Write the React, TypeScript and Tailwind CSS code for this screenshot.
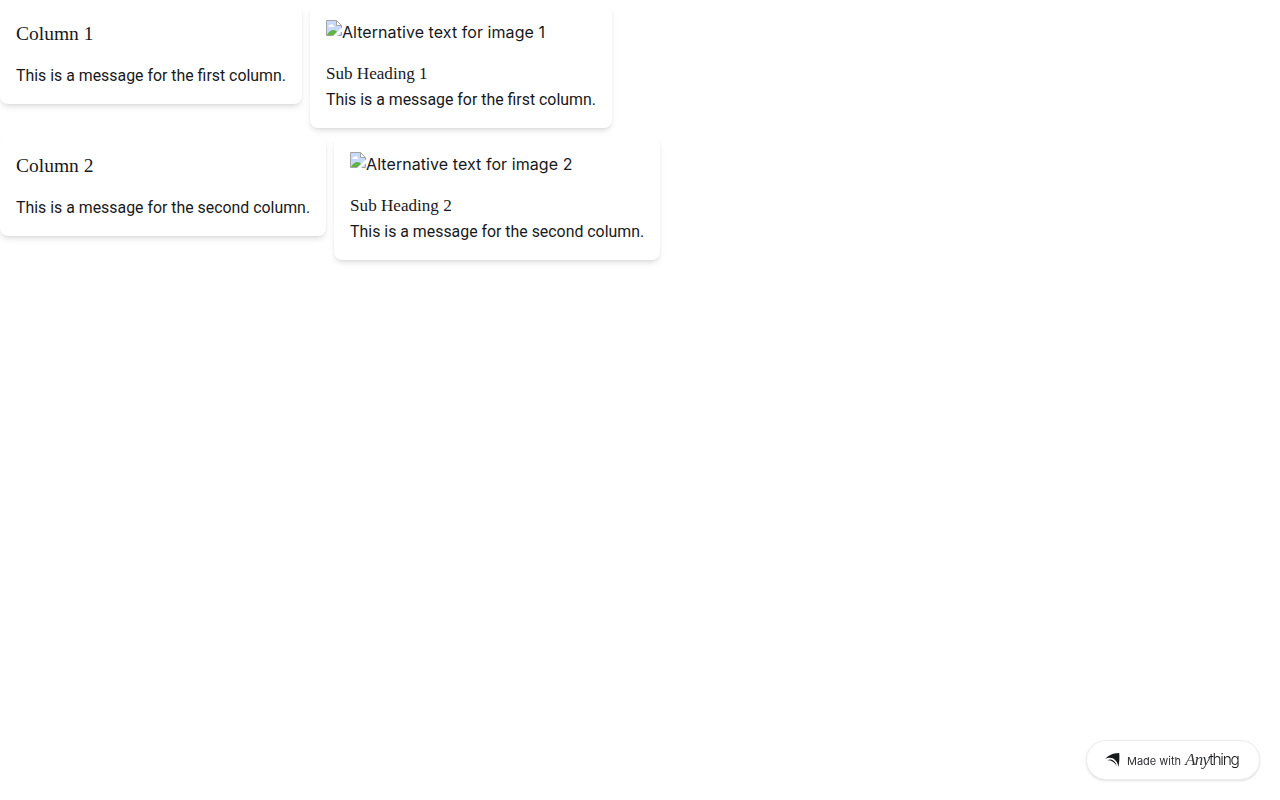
type Column = {
  id: number;
  title: string;
  alt: string;
  subHeading: string;
  message: string;
};

const columns: Column[] = [
  {
    id: 1,
    title: 'Column 1',
    alt: 'Alternative text for image 1',
    subHeading: 'Sub Heading 1',
    message: 'This is a message for the first column.',
  },
  {
    id: 2,
    title: 'Column 2',
    alt: 'Alternative text for image 2',
    subHeading: 'Sub Heading 2',
    message: 'This is a message for the second column.',
  },
];

const cardClass = 'rounded-lg bg-white p-4 shadow-md';
const messageClass = "font-['Roboto',sans-serif] text-[15.88px] leading-6";

function MissingImage({ alt }: { alt: string }) {
  return (
    <div className="mb-4 flex h-6 items-start">
      <svg width="16" height="16" viewBox="0 0 16 16" className="shrink-0">
        <path d="M.5.5h10l5 5v10H.5z" fill="#c8dafc" />
        <path d="M2.5 6.5c0-1.4 1.3-1.8 2-1.2.5-1.5 2.7-1.2 2.8.2 1 0 1 1 .7 1.500H2.8z" fill="#fff" />
        <path d="M1 15c1-3 4-5 6.5-5 2 0 3.5 1.5 3.5 2L8 15z" fill="#5eb544" />
        <path d="M16 7.5V11l-5 5H7z" fill="#fff" />
        <path d="M10.5.5l5 5h-5z" fill="#fff" />
        <path d="M7.5 15.5H.5V.5h10l5 5V8M10.5.5v5h5M11.5 15.5h4V12" fill="none" stroke="#a4a4a4" />
      </svg>
      <span className="font-['Inter',sans-serif] text-base tracking-[0.065px]">{alt}</span>
    </div>
  );
}

function ColumnRow({ column }: { column: Column }) {
  return (
    <div className="flex items-start gap-2 py-1">
      <div className={cardClass}>
        <h2 className="mb-4 font-['Liberation_Serif',serif] text-[19.5px] leading-7">{column.title}</h2>
        <p className={messageClass}>{column.message}</p>
      </div>
      <div className={cardClass}>
        <MissingImage alt={column.alt} />
        <h3 className="font-['Liberation_Serif',serif] text-[17.1px] leading-7">{column.subHeading}</h3>
        <p className={messageClass}>{column.message}</p>
      </div>
    </div>
  );
}

function MadeWithBadge() {
  return (
    <div className="fixed right-5 bottom-5 flex h-10 w-[174px] items-center rounded-full border border-[#ececec] bg-white pl-[18px] shadow-sm">
      <svg width="15" height="16" viewBox="0 0 15 16" className="shrink-0">
        <path d="M0 7C3 4 7 1 14.2 1c.5 4.5.2 9.5-.9 14.2C13 9 7.500 3.200 0 7z" fill="#18191b" />
        <path d="M2.5 8.300c3.500-2.300 8.300.7 9.300 5.700C9.500 10.200 6.500 8.200 2.500 8.300z" fill="#18191b" />
        <path d="M1.500 7.300C7 4.800 11 8.500 12.600 14.300" fill="none" stroke="#fff" strokeWidth=".9" />
      </svg>
      <span className="mt-0.5 ml-[7px] font-['Inter',sans-serif] text-[11px] text-[#303036]">Made with</span>
      <span className="ml-1 flex items-baseline leading-5">
        <span className="font-['Liberation_Serif',serif] text-[17px] tracking-[-0.8px] text-[#333437] italic">Any</span>
        <span className="font-['Inter',sans-serif] text-[15.5px] font-light tracking-[-1.3px]">thing</span>
      </span>
    </div>
  );
}

export default function App() {
  return (
    <div className="min-h-screen bg-white text-[#18191b]">
      {columns.map(column => (
        <ColumnRow key={column.id} column={column} />
      ))}
      <MadeWithBadge />
    </div>
  );
}
